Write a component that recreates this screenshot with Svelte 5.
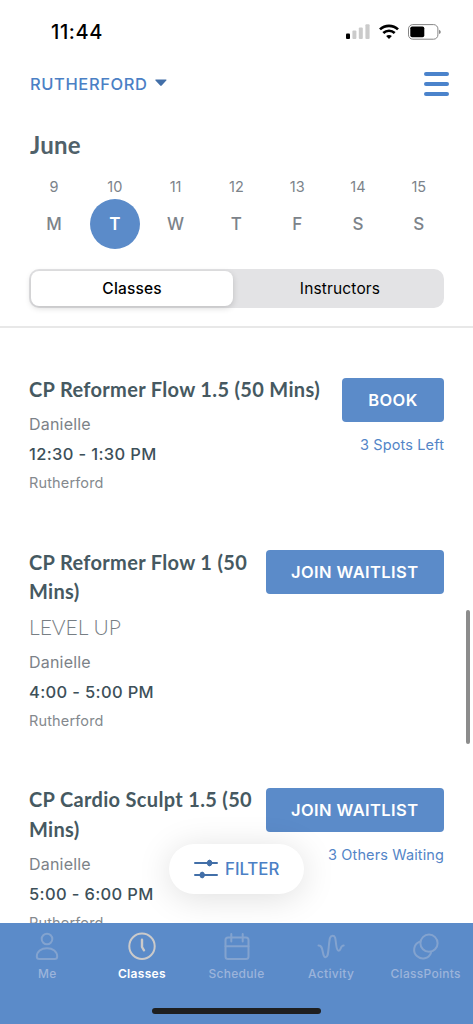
<script lang="ts">
  interface ClassItem {
    title: string;
    level?: string;
    instructor: string;
    time: string;
    location: string;
    action: string;
    note?: string;
  }

  const days = [
    { date: 9, label: 'M' },
    { date: 10, label: 'T' },
    { date: 11, label: 'W' },
    { date: 12, label: 'T' },
    { date: 13, label: 'F' },
    { date: 14, label: 'S' },
    { date: 15, label: 'S' },
  ];

  const classes: ClassItem[] = [
    {
      title: 'CP Reformer Flow 1.5 (50 Mins)',
      instructor: 'Danielle',
      time: '12:30 - 1:30 PM',
      location: 'Rutherford',
      action: 'BOOK',
      note: '3 Spots Left',
    },
    {
      title: 'CP Reformer Flow 1 (50 Mins)',
      level: 'LEVEL UP',
      instructor: 'Danielle',
      time: '4:00 - 5:00 PM',
      location: 'Rutherford',
      action: 'JOIN WAITLIST',
    },
    {
      title: 'CP Cardio Sculpt 1.5 (50 Mins)',
      instructor: 'Danielle',
      time: '5:00 - 6:00 PM',
      location: 'Rutherford',
      action: 'JOIN WAITLIST',
      note: '3 Others Waiting',
    },
  ];

  const tabs = ['Me', 'Classes', 'Schedule', 'Activity', 'ClassPoints'];

  let selectedDate = $state(10);
  let segment = $state('Classes');
  let activeTab = $state('Classes');
</script>

<div class="screen">
  <div class="status-bar">
    <span class="clock">11:44</span>
    <div class="status-icons">
      <svg width="24" height="16" viewBox="0 0 24 16">
        <rect x="0" y="9.5" width="4" height="5.5" rx="1" fill="#000" />
        <rect x="6.4" y="6.5" width="4" height="8.5" rx="1" fill="#cbcbcb" />
        <rect x="12.8" y="3.5" width="4" height="11.5" rx="1" fill="#cbcbcb" />
        <rect x="19.4" y="0.2" width="4.2" height="14.8" rx="1" fill="#cbcbcb" />
      </svg>
      <svg class="wifi" width="20" height="16" viewBox="0 0 20 16" fill="none" stroke="#000" stroke-width="2.7">
        <path d="M1 5.4C6 .6 14 .6 19 5.4" />
        <path d="M4.3 9C7.6 6 12.4 6 15.7 9" />
        <path d="M10 15l-2.9-3c1.6-1.4 4.2-1.4 5.8 0z" fill="#000" stroke="none" />
      </svg>
      <svg class="battery" width="33" height="16" viewBox="0 0 33 16">
        <rect x="0.5" y="0.6" width="29.4" height="14.6" rx="4.3" fill="none" stroke="#858585" />
        <rect x="2.3" y="2.5" width="14" height="10.8" rx="1.8" fill="#000" />
        <path d="M31.3 5.7c1.7.7 1.7 3.7 0 4.4z" fill="#555" />
      </svg>
    </div>
  </div>

  <div class="top-bar">
    <button class="location-picker">
      <span>RUTHERFORD</span>
      <svg width="12" height="8" viewBox="0 0 12 8">
        <path d="M1 .4h9.8c.7 0 1 .7.5 1.2L6.7 6.6c-.5.5-1 .5-1.5 0L.5 1.6C0 1.1.3.4 1 .4z" fill="#426fa8" />
      </svg>
    </button>
    <button class="menu" aria-label="Menu">
      <i></i><i></i><i></i>
    </button>
  </div>

  <h1>June</h1>

  <div class="week">
    {#each days as day}
      <button class="day" class:selected={day.date === selectedDate} onclick={() => (selectedDate = day.date)}>
        <span class="date">{day.date}</span>
        <span class="letter">{day.label}</span>
      </button>
    {/each}
  </div>

  <div class="segmented">
    {#each ['Classes', 'Instructors'] as name}
      <button class:on={segment === name} onclick={() => (segment = name)}>{name}</button>
    {/each}
  </div>

  <div class="list">
    {#each classes as item}
      <div class="class-row">
        <div class="info">
          <h2>{item.title}</h2>
          {#if item.level}
            <div class="level">{item.level}</div>
          {/if}
          <div class="instructor">{item.instructor}</div>
          <div class="time">{item.time}</div>
          <div class="place">{item.location}</div>
        </div>
        <div class="actions">
          <button class="book" class:wide={item.action !== 'BOOK'}>{item.action}</button>
          {#if item.note}
            <span class="note">{item.note}</span>
          {/if}
        </div>
      </div>
    {/each}
  </div>

  <!-- floats over the list -->
  <button class="filter">
    <svg width="24" height="20" viewBox="0 0 24 20" stroke="#426fa8" stroke-width="2" stroke-linecap="round">
      <path d="M1 4h22M1 16h22" />
      <ellipse cx="15.6" cy="4" rx="2.2" ry="2.9" fill="#426fa8" stroke-width="1" />
      <ellipse cx="8.2" cy="16" rx="2.2" ry="2.9" fill="#426fa8" stroke-width="1" />
    </svg>
    <span>FILTER</span>
  </button>
  <div class="scroll-thumb"></div>

  <nav>
    <div class="tabs">
      {#each tabs as tab}
        <button class="tab" class:active={activeTab === tab} onclick={() => (activeTab = tab)}>
          <svg width="30" height="30" viewBox="0 0 30 30" fill="none" stroke-width="2" stroke-linecap="round" stroke-linejoin="round">
            {#if tab === 'Me'}
              <circle cx="15" cy="8" r="5.3" />
              <path d="M7.3 28c-1.5 0-2.5-1-2.5-2.5 0-5 4.3-8.3 10.2-8.3s10.2 3.3 10.2 8.3c0 1.5-1 2.5-2.5 2.5z" />
            {:else if tab === 'Classes'}
              <circle cx="15" cy="15.3" r="12.7" />
              <path d="M15 8.8v7.2l2 3.3" stroke-width="2.4" />
            {:else if tab === 'Schedule'}
              <rect x="3.5" y="6.5" width="23" height="21.5" rx="2.5" />
              <path d="M3.5 15.3h23M9.3 3v7.5M20.7 3v7.5" />
            {:else if tab === 'Activity'}
              <path d="M2.5 14.5C5.7 14.3 6 17 6.7 20.5C7.5 25 8 26.3 9.6 26.3C11.8 26.3 12 23.5 12.8 15.5C13.6 7 14 4.7 16.6 4.7C19.6 4.7 19.5 8 20.2 14C20.7 18 21.2 19.7 22.8 19.7C25 19.7 24.2 14.5 27.7 14.5" />
            {:else}
              <circle cx="18" cy="12.2" r="8.6" />
              <path d="M8.3 10.8a8.7 8.7 0 1 0 11.7 11" />
            {/if}
          </svg>
          <span>{tab}</span>
        </button>
      {/each}
    </div>
    <div class="home-indicator"></div>
  </nav>
</div>

<style>
  :global(body) {
    margin: 0;
    background: #fff;
  }

  button {
    margin: 0;
    padding: 0;
    border: none;
    background: none;
    color: inherit;
    font: inherit;
    letter-spacing: inherit;
    cursor: pointer;
  }

  .screen {
    position: relative;
    display: flex;
    flex-direction: column;
    width: 473px;
    height: 1024px;
    overflow: hidden;
    background: #fff;
    font-family: Inter, 'Liberation Sans', sans-serif;
  }

  .status-bar {
    display: flex;
    justify-content: space-between;
    align-items: center;
    box-sizing: border-box;
    height: 62px;
    padding: 1px 32px 0 51px;
  }

  .clock {
    color: #000;
    font-size: 20px;
    font-weight: 500;
    letter-spacing: 0.6px;
  }

  .status-icons {
    display: flex;
    align-items: center;
  }

  .wifi {
    margin-left: 9px;
  }

  .battery {
    margin-left: 9px;
  }

  .top-bar {
    display: flex;
    justify-content: space-between;
    align-items: center;
    height: 44px;
    padding: 0 24px 0 30px;
  }

  .location-picker {
    display: flex;
    align-items: center;
    gap: 7px;
    color: #4b80c5;
    font-size: 16.5px;
    font-weight: 500;
    letter-spacing: 0.6px;
  }

  .location-picker svg {
    margin-bottom: 3px;
  }

  .menu {
    display: flex;
    flex-direction: column;
    gap: 6.2px;
  }

  .menu i {
    width: 25px;
    height: 4px;
    border-radius: 2px;
    background: #4b83cb;
  }

  h1 {
    margin: 22px 0 0 30px;
    height: 34px;
    color: #50616a;
    font-family: Lato, sans-serif;
    font-size: 24px;
    font-weight: 700;
    line-height: 34px;
    letter-spacing: 0.2px;
  }

  .week {
    display: grid;
    grid-template-columns: repeat(7, 60.8px);
    margin: 15px 0 0 23.6px;
  }

  .day {
    display: flex;
    flex-direction: column;
    align-items: center;
    color: #7c838a;
  }

  .date {
    height: 22px;
    font-size: 14.5px;
    line-height: 20px;
  }

  .letter {
    width: 50px;
    height: 50px;
    border-radius: 50%;
    font-size: 17px;
    font-weight: 500;
    line-height: 50px;
    text-align: center;
  }

  .selected .letter {
    background: #5b8bc9;
    color: #fff;
    font-weight: 600;
  }

  .segmented {
    display: grid;
    grid-template-columns: 202px 1fr;
    gap: 5px;
    box-sizing: border-box;
    width: 415px;
    height: 39px;
    margin: 20px 0 18px 29px;
    padding: 2px;
    border-radius: 10px;
    background: #e3e3e5;
    color: #000;
    font-size: 15.5px;
    letter-spacing: 0.15px;
  }

  .segmented .on {
    border-radius: 8px;
    background: #fff;
    box-shadow: 0 2px 6px rgba(0, 0, 0, 0.16);
    font-weight: 500;
  }

  .list {
    flex: 1;
    min-height: 0;
    overflow: hidden;
    display: flex;
    flex-direction: column;
    gap: 51.5px;
    padding: 47.3px 29px 0;
    border-top: 2px solid #e8e8e8;
  }

  .class-row {
    flex: none;
    display: flex;
    justify-content: space-between;
    gap: 8px;
  }

  .info {
    flex: 1;
  }

  h2 {
    margin: 0;
    color: #465961;
    font-family: Lato, sans-serif;
    font-size: 20px;
    font-weight: 700;
    line-height: 29.5px;
    letter-spacing: 0.33px;
  }

  h2 + .instructor {
    margin-top: 4.5px;
  }

  .level {
    color: #777e84;
    font-family: Lato, sans-serif;
    font-size: 21px;
    font-weight: 300;
    line-height: 40px;
  }

  .instructor {
    color: #7c8288;
    font-size: 16px;
    line-height: 30px;
    letter-spacing: 0.2px;
  }

  .time {
    color: #3d5059;
    font-size: 16.5px;
    font-weight: 500;
    line-height: 31px;
    letter-spacing: 0.35px;
  }

  .place {
    color: #84898e;
    font-size: 14.5px;
    line-height: 26px;
    letter-spacing: 0.15px;
  }

  .actions {
    display: flex;
    flex-direction: column;
    align-items: flex-end;
    padding-top: 2.6px;
  }

  .book {
    width: 102px;
    height: 44px;
    border-radius: 4px;
    background: #5b8bc9;
    color: #fff;
    font-size: 16.5px;
    font-weight: 600;
    letter-spacing: 0.4px;
  }

  .wide {
    width: 178.5px;
  }

  .note {
    margin-top: 11px;
    height: 24px;
    color: #5385c7;
    font-size: 14.5px;
    line-height: 24px;
    letter-spacing: 0.12px;
  }

  .filter {
    position: absolute;
    left: 169px;
    top: 844px;
    display: flex;
    align-items: center;
    gap: 7px;
    box-sizing: border-box;
    width: 135px;
    height: 50px;
    padding-left: 25px;
    border-radius: 25px;
    background: #fff;
    box-shadow: 0 4px 34px rgba(0, 0, 0, 0.13);
    color: #4b80c5;
    font-size: 16.8px;
    font-weight: 500;
  }

  .scroll-thumb {
    position: absolute;
    left: 466px;
    top: 610px;
    width: 4px;
    height: 134px;
    border-radius: 2px;
    background: #8c8c8c;
  }

  nav {
    position: relative;
    flex: none;
    display: flex;
    flex-direction: column;
    align-items: center;
    height: 101px;
    background: #5b8bc9;
  }

  .tabs {
    display: grid;
    grid-template-columns: repeat(5, 94.6px);
    padding-top: 8px;
    height: 77px;
  }

  .tab {
    display: flex;
    flex-direction: column;
    align-items: center;
    color: #9bb4db;
    font-size: 12px;
    font-weight: 500;
    letter-spacing: 0.3px;
    line-height: 20px;
  }

  .tab svg {
    stroke: #83a3cf;
    margin-bottom: 3px;
  }

  .tab.active {
    color: #fff;
    font-weight: 600;
  }

  .tab.active svg {
    stroke: #cbcaca;
  }

  .home-indicator {
    width: 169px;
    height: 6px;
    border-radius: 3px;
    background: #1e1f20;
  }
</style>
